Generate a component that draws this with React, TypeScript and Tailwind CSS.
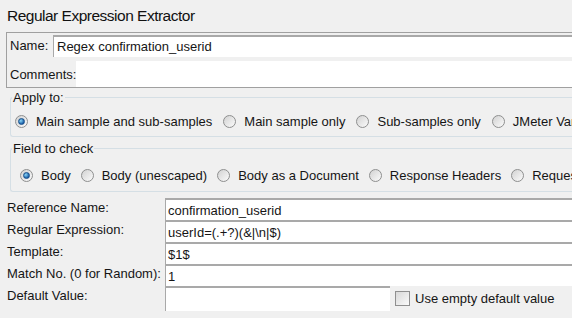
import React from "react";

const FONT = { fontFamily: '"Liberation Sans", Tahoma, Arial, sans-serif' };

function Radio({ checked, label }: { checked?: boolean; label: string }) {
    return (
        <label className="flex items-center gap-[8px] shrink-0 whitespace-nowrap">
            <span className="w-[13px] h-[13px] rounded-full border border-[#8e8f8f] bg-gradient-to-br from-[#d2d2d2] to-[#fbfbfb] flex items-center justify-center">
                {checked && (
                    <span className="w-[7px] h-[7px] rounded-full bg-[radial-gradient(circle_at_35%_35%,#8ad8f8,#1b5fa8_70%)] border border-[#174f8a]" />
                )}
            </span>
            <span>{label}</span>
        </label>
    );
}

function Group({ title, children, className }: { title: string; children: React.ReactNode; className?: string }) {
    return (
        <fieldset className={`ml-[10px] border border-r-0 border-[#d5dfe5] rounded-l-[3px] ${className ?? ""}`}>
            <legend className="ml-[1px] px-[1px]">{title}</legend>
            {children}
        </fieldset>
    );
}

const FIELDS = [
    { label: "Reference Name:", value: "confirmation_userid" },
    { label: "Regular Expression:", value: "userId=(.+?)(&|\\n|$)" },
    { label: "Template:", value: "$1$" },
    { label: "Match No. (0 for Random):", value: "1" },
];

export default function App() {
    return (
        <div className="w-[572px] h-[318px] overflow-hidden bg-[#f0f0f0] text-[13px] text-[#151515] leading-none" style={FONT}>
            {/* Title */}
            <div className="h-[32px] pl-[7px] pt-[8px] text-[15.5px] tracking-[-0.5px] text-[#111] whitespace-nowrap">Regular Expression Extractor</div>

            {/* Name / comments panel */}
            <div className="ml-[6px] h-[56px] border-l border-t border-b border-[#a0a0a0] flex flex-col">
                <div className="flex items-center h-[23px] mt-[1px]">
                    <span className="w-[46px] pl-[3px] whitespace-nowrap">Name:</span>
                    <div className="flex-1 h-[22px] bg-white border-t-2 border-l border-[#a9a9a9] flex items-center pl-[3px] whitespace-nowrap">
                        Regex confirmation_userid
                    </div>
                </div>
                <div className="flex items-center flex-1 mt-[4px]">
                    <span className="w-[69px] pl-[3px] whitespace-nowrap">Comments:</span>
                    <div className="flex-1 h-full bg-white" />
                </div>
            </div>

            {/* Apply to */}
            <Group title="Apply to:" className="mt-[3px] h-[46px]">
                <div className="flex items-center gap-[11px] pl-[4px] pt-[11px]">
                    <Radio checked label="Main sample and sub-samples" />
                    <Radio label="Main sample only" />
                    <Radio label="Sub-samples only" />
                    <Radio label="JMeter Variable" />
                </div>
            </Group>

            {/* Field to check */}
            <Group title="Field to check" className="mt-[5px] h-[50px]">
                <div className="flex items-center gap-[10px] pl-[9px] pt-[14px]">
                    <Radio checked label="Body" />
                    <Radio label="Body (unescaped)" />
                    <Radio label="Body as a Document" />
                    <Radio label="Response Headers" />
                    <Radio label="Request Headers" />
                </div>
            </Group>

            {/* Extractor fields */}
            <div className="mt-[6px] flex flex-col">
                {FIELDS.map((f) => (
                    <div key={f.label} className="flex h-[22px]">
                        <span className="w-[165px] pl-[7px] pt-[3px] whitespace-nowrap">{f.label}</span>
                        <div className="flex-1 bg-white border-t-2 border-l border-[#a9a9a9] flex items-center pl-[2px] whitespace-nowrap">
                            {f.value}
                        </div>
                    </div>
                ))}
                <div className="flex h-[25px]">
                    <span className="w-[165px] pl-[7px] pt-[3px] whitespace-nowrap">Default Value:</span>
                    <div className="w-[225px] bg-white border-t-2 border-l border-[#a9a9a9]" />
                    <label className="flex items-center gap-[5px] pl-[5px] whitespace-nowrap">
                        <span className="w-[15px] h-[15px] border border-[#8f8f8f] bg-gradient-to-br from-[#d8d8d8] to-[#fafafa]" />
                        <span>Use empty default value</span>
                    </label>
                </div>
            </div>
        </div>
    );
}
